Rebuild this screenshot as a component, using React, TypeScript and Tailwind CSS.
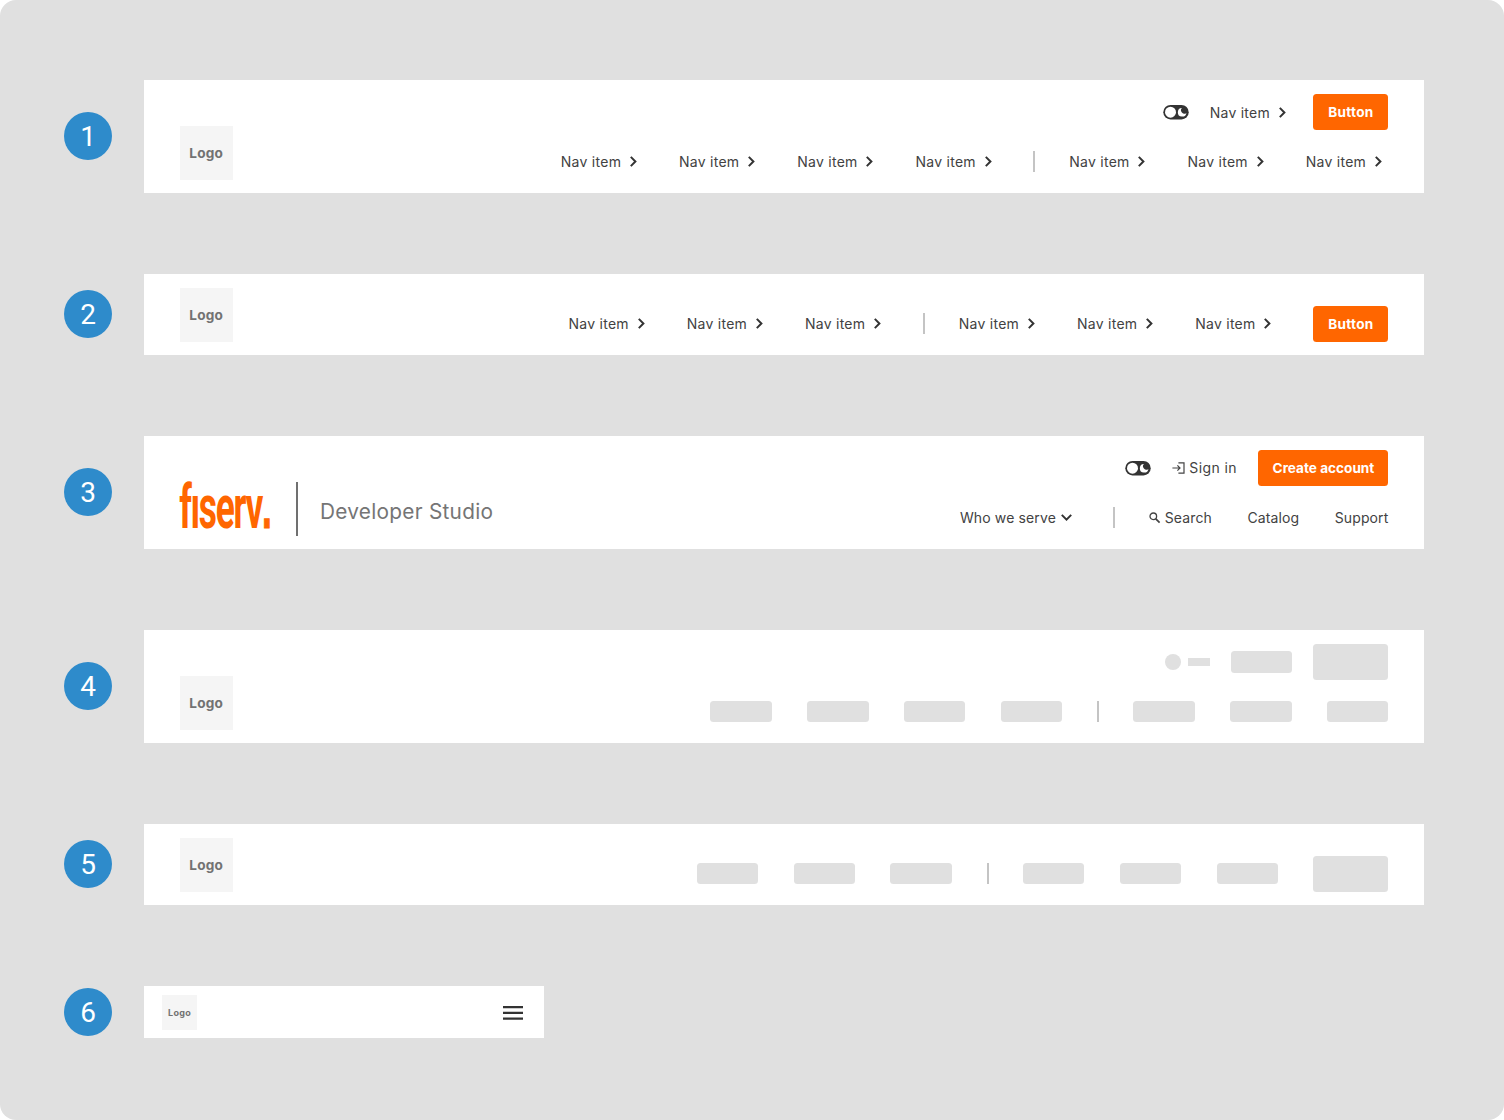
import React from "react";

function Badge({ n, className }: { n: number; className: string }) {
  return (
    <div
      className={`flex h-12 w-12 shrink-0 items-center justify-center rounded-full bg-[#2e8bcb] pt-px font-['Roboto',sans-serif] text-[28px] leading-none tracking-normal text-white ${className}`}
    >
      {n}
    </div>
  );
}

function Row({ n, height, badge, children }: { n: number; height: string; badge: string; children: React.ReactNode }) {
  return (
    <section className={`flex items-start gap-8 ${height}`}>
      <Badge n={n} className={badge} />
      {children}
    </section>
  );
}

function Bar({ size, logo, children }: { size: "tall" | "short"; logo?: React.ReactNode; children: React.ReactNode }) {
  return (
    <header
      className={`flex w-[1280px] items-end justify-between bg-white px-[35.56px] pb-[13.33px] ${size === "tall" ? "h-[112.89px]" : "h-[80.89px]"}`}
    >
      {logo ?? <LogoBox />}
      <div className={`flex flex-col items-end gap-[21.33px] ${size === "tall" ? "pb-[7.1px]" : ""}`}>{children}</div>
    </header>
  );
}

function LogoBox() {
  return (
    <div className="flex h-[53.33px] w-[53.33px] items-center justify-center bg-[#f5f5f5] pt-px text-[13.6px] leading-none font-bold tracking-[0.2px] text-[#727272]">
      Logo
    </div>
  );
}

function ChevronRight() {
  return (
    <svg className="h-[11px] w-[7px]" viewBox="0 0 7 11" fill="none" stroke="#333333" strokeWidth="2">
      <path d="M0.8 0.9 5.4 5.5 0.8 10.1" />
    </svg>
  );
}

function ChevronDown() {
  return (
    <svg className="h-[7px] w-[11px]" viewBox="0 0 11 7" fill="none" stroke="#333333" strokeWidth="2">
      <path d="M0.8 0.9 5.5 5.6 10.2 0.9" />
    </svg>
  );
}

function NavItem() {
  return (
    <a className="flex h-[21.33px] w-[82.7px] items-center">
      <span className="w-[69px] pt-px whitespace-nowrap">Nav item</span>
      <ChevronRight />
    </a>
  );
}

function Divider() {
  return <div className="-mr-[1.5px] -ml-[0.5px] h-[21.33px] w-[2px] bg-[#c4c4c4]" />;
}

function Toggle() {
  return (
    <svg className="h-[15px] w-[26px]" viewBox="0 0 26 15">
      <rect x="0.3" y="0" width="25.4" height="14.4" rx="7.2" fill="#333333" />
      <circle cx="7.5" cy="7.2" r="5.5" fill="#ffffff" />
      <path d="M19 3A4.3 4.3 0 1 0 23.4 7.9 3.3 3.3 0 0 1 19 3Z" fill="#ffffff" />
    </svg>
  );
}

function Button({ children, className }: { children: string; className: string }) {
  return (
    <button
      className={`flex h-[35.56px] items-center justify-center rounded-[3.5px] bg-[#ff6600] pt-[2px] text-[13.6px] font-bold whitespace-nowrap text-white ${className}`}
    >
      {children}
    </button>
  );
}

function SignInIcon() {
  return (
    <svg className="h-[12px] w-[13px]" viewBox="0 0 13 12" fill="none" stroke="#444444" strokeWidth="1.2">
      <path d="M0.4 6H8M5.4 3.4 8 6 5.4 8.6M6.4 0.9H12V11.1H6.4" />
    </svg>
  );
}

function SearchIcon() {
  return (
    <svg className="h-[12px] w-[12px]" viewBox="0 0 12 12" fill="none" stroke="#444444">
      <circle cx="4.3" cy="4.3" r="3.3" strokeWidth="1.3" />
      <path d="M6.8 6.8 10.6 10.6" strokeWidth="1.7" />
    </svg>
  );
}

function Fiserv() {
  return (
    <div className="flex h-[53.33px] items-center">
      <svg className="h-[53px] w-[93px] overflow-visible" viewBox="0 0 93 53" role="img" aria-label="fiserv.">
        <text
          transform="translate(-0.8 45.7) scale(0.57 1)"
          letterSpacing="-2.3"
          fontFamily="Roboto, sans-serif"
          fontWeight="700"
          fontSize="62"
          fill="#ff6600"
        >
          fıserv
          <tspan
            fontFamily="Liberation Sans, Arial, sans-serif"
            stroke="#ff6600"
            strokeWidth="1.2"
          >
            .
          </tspan>
        </text>
      </svg>
      <div className="ml-[23.4px] h-[53.33px] w-[1.6px] bg-[#707070]" />
      <span className="mt-[8px] ml-[22.5px] text-[20.8px] leading-none tracking-[0.27px] text-[#757575]">
        Developer Studio
      </span>
    </div>
  );
}

function Pill() {
  return <div className="h-[21.33px] w-[61.33px] rounded-[3.5px] bg-[#e0e0e0]" />;
}

function ButtonBlock() {
  return <div className="h-[35.56px] w-[75px] rounded-[3.5px] bg-[#e0e0e0]" />;
}

function repeat(count: number, Item: React.ComponentType) {
  return Array.from({ length: count }, (_, i) => <Item key={i} />);
}

export default function App() {
  return (
    <div className="h-[1120px] w-[1504px] bg-white">
      <main className="h-[1120px] w-[1504px] rounded-2xl bg-[#e0e0e0] pt-20 pl-16 font-['Inter',Arial,sans-serif] text-[14px] leading-none tracking-[0.26px] text-[#424242]">
        <Row n={1} height="h-[194px]" badge="mt-8">
          <Bar size="tall">
            <div className="flex items-center gap-[21.1px]">
              <Toggle />
              <NavItem />
              <Button className="w-[75px]">Button</Button>
            </div>
            <nav className="flex gap-[35.56px]">
              {repeat(4, NavItem)}
              <Divider />
              {repeat(3, NavItem)}
            </nav>
          </Bar>
        </Row>
        <Row n={2} height="h-[162px]" badge="mt-4">
          <Bar size="short">
            <nav className="flex items-center gap-[35.56px]">
              {repeat(3, NavItem)}
              <Divider />
              {repeat(3, NavItem)}
              <Button className="w-[75px]">Button</Button>
            </nav>
          </Bar>
        </Row>
        <Row n={3} height="h-[194px]" badge="mt-8">
          <Bar size="tall" logo={<Fiserv />}>
            <div className="flex items-center gap-[21.5px]">
              <Toggle />
              <a className="flex items-center gap-1 tracking-[0.4px]">
                <SignInIcon />
                <span>Sign in</span>
              </a>
              <Button className="w-[130px] tracking-normal">Create account</Button>
            </div>
            <nav className="flex h-[21.33px] items-center gap-[35.4px] tracking-[0.13px]">
              <a className="mr-[6px] flex items-center gap-[5px]">
                <span className="pt-px">Who we serve</span>
                <ChevronDown />
              </a>
              <Divider />
              <a className="flex items-center gap-1">
                <SearchIcon />
                <span className="pt-px">Search</span>
              </a>
              <a className="pt-px">Catalog</a>
              <a className="pt-px">Support</a>
            </nav>
          </Bar>
        </Row>
        <Row n={4} height="h-[194px]" badge="mt-8">
          <Bar size="tall">
            <div className="flex items-center gap-[21.1px]">
              <div className="flex items-center gap-[7px]">
                <div className="h-4 w-4 rounded-full bg-[#e0e0e0]" />
                <div className="h-[7.1px] w-[21.5px] bg-[#e0e0e0]" />
              </div>
              <Pill />
              <ButtonBlock />
            </div>
            <div className="flex gap-[35.56px]">
              {repeat(4, Pill)}
              <Divider />
              {repeat(3, Pill)}
            </div>
          </Bar>
        </Row>
        <Row n={5} height="h-[162px]" badge="mt-4">
          <Bar size="short">
            <div className="flex items-center gap-[35.56px]">
              {repeat(3, Pill)}
              <Divider />
              {repeat(3, Pill)}
              <ButtonBlock />
            </div>
          </Bar>
        </Row>
        <Row n={6} height="h-[52px]" badge="mt-0.5">
          <header className="flex h-[52.3px] w-[400px] items-center justify-between bg-white pt-px pr-[21px] pl-[17.78px]">
            <div className="flex h-[35.56px] w-[35.56px] items-center justify-center bg-[#f5f5f5] text-[9px] font-bold text-[#727272]">
              Logo
            </div>
            <svg className="h-[14px] w-5" viewBox="0 0 20 14" fill="#333333">
              <path d="M0 0H20V2.2H0ZM0 5.8H20V8H0ZM0 11.5H20V13.7H0Z" />
            </svg>
          </header>
        </Row>
      </main>
    </div>
  );
}
